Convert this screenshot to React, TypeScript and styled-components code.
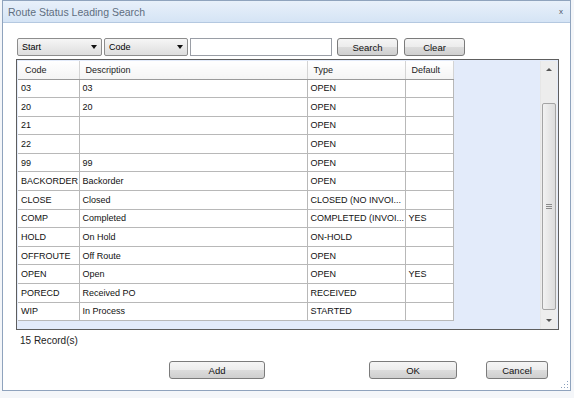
import styled, { createGlobalStyle } from 'styled-components';

const GlobalStyle = createGlobalStyle`
    html, body {
        margin: 0;
        padding: 0;
        background: #f4f6f9;
    }
    body {
        font-family: 'Liberation Sans', Arial, sans-serif;
        font-size: 9px;
        color: #000;
    }
`;

const Frame = styled.div`
    position: relative;
    width: 569px;
    height: 391px;
    margin-left: 2px;
    border: 1px solid #8fa3bd;
    background: #fff;
    box-sizing: border-box;
    display: flex;
    flex-direction: column;
`;

const TitleBar = styled.div`
    height: 22px;
    flex-shrink: 0;
    display: flex;
    align-items: center;
    justify-content: space-between;
    padding: 0 7px 0 5px;
    background: linear-gradient(#e8f0fa, #d5e4f5);
    border-bottom: 1px solid #b4c8e0;
    box-sizing: border-box;
`;

const Title = styled.span`
    font-size: 10.5px;
    color: #5f6e80;
`;

const Close = styled.span`
    font-size: 8px;
    color: #4a5566;
`;

const Body = styled.div`
    flex: 1;
    display: flex;
    flex-direction: column;
    padding: 15px 12px 0 13px;
`;

const Toolbar = styled.div`
    display: flex;
    align-items: center;
    height: 18px;
    margin-left: 1px;
`;

const Select = styled.div<{ $w: number }>`
    width: ${(p) => p.$w}px;
    height: 18px;
    margin-right: 2px;
    box-sizing: border-box;
    border: 1px solid #8d8d8d;
    border-radius: 2px;
    background: linear-gradient(#f6f6f6, #dedede);
    display: flex;
    align-items: center;
    justify-content: space-between;
    padding: 0 4px;
    font-size: 9px;
`;

const Caret = styled.span`
    width: 0;
    height: 0;
    border-left: 3.5px solid transparent;
    border-right: 3.5px solid transparent;
    border-top: 4px solid #111;
`;

const SearchInput = styled.div`
    width: 142px;
    height: 18px;
    box-sizing: border-box;
    border: 1px solid #9a9ea6;
    background: #fff;
`;

const Button = styled.div<{ $w: number; $ml: number }>`
    width: ${(p) => p.$w}px;
    height: 18px;
    margin-left: ${(p) => p.$ml}px;
    box-sizing: border-box;
    border: 1px solid #7b7b7b;
    border-radius: 3px;
    background: linear-gradient(#f5f5f5 0%, #ececec 50%, #dcdcdc 51%, #cfcfcf 100%);
    display: flex;
    align-items: center;
    justify-content: center;
    font-size: 9.5px;
    color: #111;
`;

const Grid = styled.div`
    margin-top: 3px;
    width: 543px;
    height: 271px;
    box-sizing: border-box;
    border: 1px solid #5e5e5e;
    background: #e3ebfa;
    display: flex;
    justify-content: space-between;
    padding: 1px 0 0 1px;
`;

const Table = styled.table`
    border-collapse: collapse;
    table-layout: fixed;
    width: 435px;
    align-self: flex-start;
    background: #fff;
    font-size: 9px;
`;

const Th = styled.th<{ $w: number }>`
    width: ${(p) => p.$w}px;
    height: 18px;
    padding: 0 0 0 6px;
    text-align: left;
    font-weight: normal;
    color: #222;
    background: linear-gradient(#fff, #f4f4f4);
    border-right: 1px solid #d4d4d4;
    border-bottom: 1px solid #9a9a9a;
    box-sizing: border-box;
    &:first-child {
        padding-left: 7px;
    }
`;

const Td = styled.td`
    height: 18.6px;
    padding: 0 0 0 3px;
    border-right: 1px solid #b8b8b8;
    border-bottom: 1px solid #b8b8b8;
    white-space: nowrap;
    overflow: hidden;
    box-sizing: border-box;
    color: #111;
`;

const Scrollbar = styled.div`
    width: 16px;
    margin-right: 1px;
    display: flex;
    flex-direction: column;
    background: #ededed;
    border-left: 1px solid #e6e6e6;
`;

const Arrow = styled.div<{ $up?: boolean }>`
    height: 17px;
    display: flex;
    align-items: center;
    justify-content: center;
    &::after {
        content: '';
        border-left: 3px solid transparent;
        border-right: 3px solid transparent;
        ${(p) => (p.$up ? 'border-bottom' : 'border-top')}: 3px solid #555;
    }
`;

const Track = styled.div`
    flex: 1;
    padding: 25px 1px 1px 1px;
    display: flex;
`;

const Thumb = styled.div`
    flex: 1;
    border: 1px solid #a4a4a4;
    border-radius: 2px;
    background: linear-gradient(90deg, #f2f2f2, #dcdcdc);
    display: flex;
    align-items: center;
    justify-content: center;
    margin-bottom: 1px;
`;

const Gripper = styled.div`
    width: 6px;
    height: 6px;
    background: repeating-linear-gradient(#8a8a8a 0 1px, transparent 1px 2px);
`;

const Records = styled.div`
    margin: 5px 0 0 4px;
    font-size: 10px;
    color: #222;
`;

const Footer = styled.div`
    display: flex;
    margin-top: 15px;
    padding-left: 153px;
`;

const Grip = styled.div`
    position: absolute;
    right: 2px;
    bottom: 2px;
    width: 8px;
    height: 8px;
    background: radial-gradient(circle, #8aa0bd 0.8px, transparent 1px) 0 0 / 3px 3px;
    clip-path: polygon(100% 0, 100% 100%, 0 100%);
`;

type Row = { code: string; desc: string; type: string; def: string };

const rows: Row[] = [
    { code: '03', desc: '03', type: 'OPEN', def: '' },
    { code: '20', desc: '20', type: 'OPEN', def: '' },
    { code: '21', desc: '', type: 'OPEN', def: '' },
    { code: '22', desc: '', type: 'OPEN', def: '' },
    { code: '99', desc: '99', type: 'OPEN', def: '' },
    { code: 'BACKORDER', desc: 'Backorder', type: 'OPEN', def: '' },
    { code: 'CLOSE', desc: 'Closed', type: 'CLOSED (NO INVOI...', def: '' },
    { code: 'COMP', desc: 'Completed', type: 'COMPLETED (INVOI...', def: 'YES' },
    { code: 'HOLD', desc: 'On Hold', type: 'ON-HOLD', def: '' },
    { code: 'OFFROUTE', desc: 'Off Route', type: 'OPEN', def: '' },
    { code: 'OPEN', desc: 'Open', type: 'OPEN', def: 'YES' },
    { code: 'PORECD', desc: 'Received PO', type: 'RECEIVED', def: '' },
    { code: 'WIP', desc: 'In Process', type: 'STARTED', def: '' },
];

export default function App() {
    return (
        <>
            <GlobalStyle />
            <Frame>
                <TitleBar>
                    <Title>Route Status Leading Search</Title>
                    <Close>x</Close>
                </TitleBar>
                <Body>
                    <Toolbar>
                        <Select $w={85}>
                            Start
                            <Caret />
                        </Select>
                        <Select $w={84}>
                            Code
                            <Caret />
                        </Select>
                        <SearchInput />
                        <Button $w={61} $ml={5}>
                            Search
                        </Button>
                        <Button $w={61} $ml={6}>
                            Clear
                        </Button>
                    </Toolbar>

                    <Grid>
                        <Table>
                            <thead>
                                <tr>
                                    <Th $w={61}>Code</Th>
                                    <Th $w={228}>Description</Th>
                                    <Th $w={98}>Type</Th>
                                    <Th $w={48}>Default</Th>
                                </tr>
                            </thead>
                            <tbody>
                                {rows.map((r) => (
                                    <tr key={r.code}>
                                        <Td>{r.code}</Td>
                                        <Td>{r.desc}</Td>
                                        <Td>{r.type}</Td>
                                        <Td>{r.def}</Td>
                                    </tr>
                                ))}
                            </tbody>
                        </Table>
                        <Scrollbar>
                            <Arrow $up />
                            <Track>
                                <Thumb>
                                    <Gripper />
                                </Thumb>
                            </Track>
                            <Arrow />
                        </Scrollbar>
                    </Grid>

                    <Records>15 Record(s)</Records>

                    <Footer>
                        <Button $w={96} $ml={0}>
                            Add
                        </Button>
                        <Button $w={88} $ml={104}>
                            OK
                        </Button>
                        <Button $w={62} $ml={29}>
                            Cancel
                        </Button>
                    </Footer>
                </Body>
                <Grip />
            </Frame>
        </>
    );
}
